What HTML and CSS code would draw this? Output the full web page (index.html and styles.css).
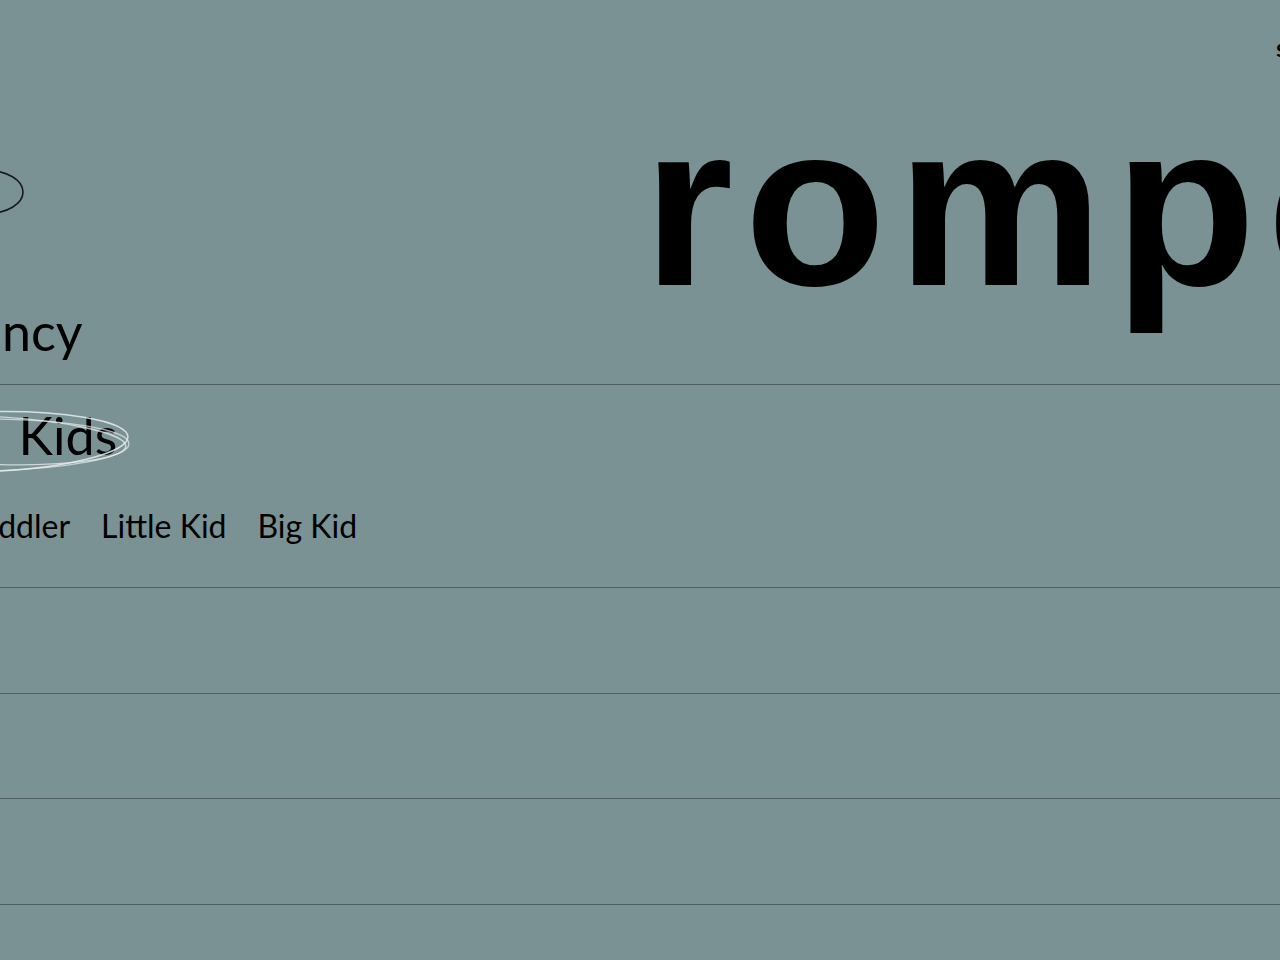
FILE: index.html
```html
<!DOCTYPE html>
<html lang="en">
<head>
<meta charset="utf-8">
<title>rompers</title>
<link rel="stylesheet" href="styles.css">
</head>
<body>
<div class="page">
  <header class="masthead">
    <div class="mark-cell">
      <svg class="mark" width="100" height="60" viewBox="0 0 100 60" aria-hidden="true">
        <ellipse cx="37" cy="30" rx="36" ry="21.5" fill="none" stroke="#151a1b" stroke-width="1.6"/>
      </svg>
    </div>
    <div class="brand-cell">
      <div class="util"><a class="util-link" href="#">shop</a></div>
      <div class="wordmark">rompers</div>
    </div>
  </header>
  <nav class="menu">
    <div class="row row-first"><a class="item" href="#">Pregnancy</a></div>
    <div class="row row-active">
      <div class="item-wrap">
        <a class="item" href="#">Young Kids</a>
        <svg class="scribble" width="340" height="80" viewBox="0 0 340 80" aria-hidden="true">
          <ellipse cx="156" cy="42" rx="148" ry="30" transform="rotate(-2 156 42)" fill="none" stroke="rgba(232,238,238,0.85)" stroke-width="1.5"/>
          <ellipse cx="158" cy="40" rx="144" ry="24" transform="rotate(2.5 158 40)" fill="none" stroke="rgba(232,238,238,0.75)" stroke-width="1.4"/>
          <ellipse cx="154" cy="45" rx="151" ry="26" transform="rotate(-0.5 154 45)" fill="none" stroke="rgba(232,238,238,0.7)" stroke-width="1.3"/>
        </svg>
      </div>
      <ul class="sub">
        <li><a href="#">Toddler</a></li>
        <li><a href="#">Little Kid</a></li>
        <li><a href="#">Big Kid</a></li>
      </ul>
    </div>
    <div class="row row-empty"></div>
    <div class="row row-empty"></div>
    <div class="row row-empty"></div>
    <div class="row row-empty"></div>
  </nav>
</div>
</body>
</html>
```
FILE: styles.css
```css
html, body {
  margin: 0;
  padding: 0;
}
body {
  background: #7a9293;
  color: #000;
  font-family: "Lato", "Liberation Sans", sans-serif;
  overflow: hidden;
  height: 960px;
}
a {
  color: inherit;
  text-decoration: none;
}
.page {
  margin-left: -156px;
}
.masthead {
  display: grid;
  grid-template-columns: 798px 1fr;
  height: 300px;
}
.mark-cell {
  padding-top: 162px;
  padding-left: 106px;
}
.mark {
  display: block;
}
.brand-cell {
  min-width: 0;
  white-space: nowrap;
}
.util {
  padding-top: 35px;
  padding-left: 634px;
  height: 25px;
  font-size: 25px;
  line-height: 1;
  font-weight: 700;
}
.wordmark {
  margin-top: 29px;
  margin-left: 1px;
  font-family: "Liberation Sans", "Arial", sans-serif;
  font-weight: 700;
  font-size: 232px;
  line-height: 1;
  letter-spacing: 11px;
}
.menu {
  display: flex;
  flex-direction: column;
}
.row {
  border-bottom: 1px solid #4e5e62;
}
.item {
  display: block;
  font-size: 52px;
  line-height: 1.2;
  word-spacing: 20px;
  width: max-content;
}
.row-first {
  padding-bottom: 22px;
}
.row-active {
  padding-top: 19px;
  padding-bottom: 42px;
}
.item-wrap {
  position: relative;
}
.scribble {
  position: absolute;
  left: -20px;
  top: -4px;
  pointer-events: none;
}
.sub {
  list-style: none;
  margin: 40px 0 0;
  padding: 0 0 0 121px;
  display: flex;
  gap: 31px;
  font-size: 32px;
  line-height: 1.2;
}
.row-empty {
  height: 104.6px;
}
```
